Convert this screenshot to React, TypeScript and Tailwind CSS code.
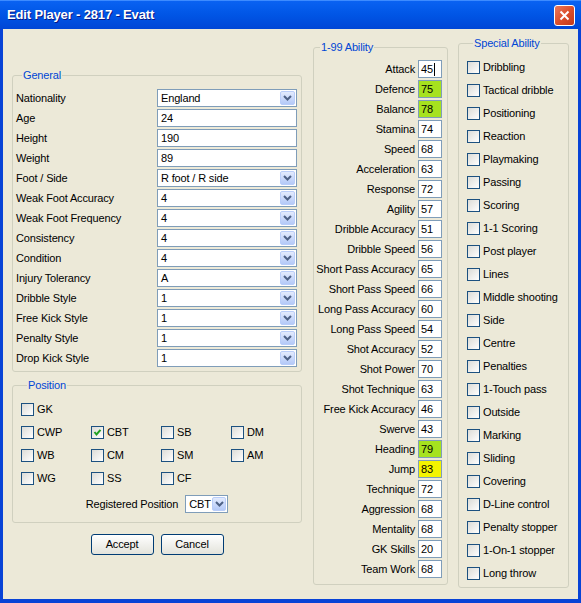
import React from 'react';
import clsx from 'clsx';

type Attr = { label: string; value: string; hi?: 'green' | 'yellow'; caret?: boolean };

const general: { label: string; value: string; select: boolean }[] = [
  { label: 'Nationality', value: 'England', select: true },
  { label: 'Age', value: '24', select: false },
  { label: 'Height', value: '190', select: false },
  { label: 'Weight', value: '89', select: false },
  { label: 'Foot / Side', value: 'R foot / R side', select: true },
  { label: 'Weak Foot Accuracy', value: '4', select: true },
  { label: 'Weak Foot Frequency', value: '4', select: true },
  { label: 'Consistency', value: '4', select: true },
  { label: 'Condition', value: '4', select: true },
  { label: 'Injury Tolerancy', value: 'A', select: true },
  { label: 'Dribble Style', value: '1', select: true },
  { label: 'Free Kick Style', value: '1', select: true },
  { label: 'Penalty Style', value: '1', select: true },
  { label: 'Drop Kick Style', value: '1', select: true },
];

const abilities: Attr[] = [
  { label: 'Attack', value: '45', caret: true },
  { label: 'Defence', value: '75', hi: 'green' },
  { label: 'Balance', value: '78', hi: 'green' },
  { label: 'Stamina', value: '74' },
  { label: 'Speed', value: '68' },
  { label: 'Acceleration', value: '63' },
  { label: 'Response', value: '72' },
  { label: 'Agility', value: '57' },
  { label: 'Dribble Accuracy', value: '51' },
  { label: 'Dribble Speed', value: '56' },
  { label: 'Short Pass Accuracy', value: '65' },
  { label: 'Short Pass Speed', value: '66' },
  { label: 'Long Pass Accuracy', value: '60' },
  { label: 'Long Pass Speed', value: '54' },
  { label: 'Shot Accuracy', value: '52' },
  { label: 'Shot Power', value: '70' },
  { label: 'Shot Technique', value: '63' },
  { label: 'Free Kick Accuracy', value: '46' },
  { label: 'Swerve', value: '43' },
  { label: 'Heading', value: '79', hi: 'green' },
  { label: 'Jump', value: '83', hi: 'yellow' },
  { label: 'Technique', value: '72' },
  { label: 'Aggression', value: '68' },
  { label: 'Mentality', value: '68' },
  { label: 'GK Skills', value: '20' },
  { label: 'Team Work', value: '68' },
];

const specials = [
  'Dribbling', 'Tactical dribble', 'Positioning', 'Reaction', 'Playmaking', 'Passing',
  'Scoring', '1-1 Scoring', 'Post player', 'Lines', 'Middle shooting', 'Side', 'Centre',
  'Penalties', '1-Touch pass', 'Outside', 'Marking', 'Sliding', 'Covering', 'D-Line control',
  'Penalty stopper', '1-On-1 stopper', 'Long throw',
];

const positions: (string | null)[][] = [
  ['GK', null, null, null],
  ['CWP', 'CBT', 'SB', 'DM'],
  ['WB', 'CM', 'SM', 'AM'],
  ['WG', 'SS', 'CF', null],
];

const Chevron = () => (
  <svg width="9" height="6" viewBox="0 0 9 6">
    <path d="M1 1 L4.5 4.5 L8 1" fill="none" stroke="#4d6185" strokeWidth="2" />
  </svg>
);

const Select = ({ value, className }: { value: string; className?: string }) => (
  <div className={clsx('flex h-[18px] items-center border border-[#7f9db9] bg-white', className)}>
    <span className="flex-1 pl-[3px] leading-none">{value}</span>
    <span className="m-px flex h-[14px] w-[15px] items-center justify-center rounded-[2px] border border-[#b9cdf9] bg-gradient-to-b from-[#e3ebfd] to-[#b4c9f8]">
      <Chevron />
    </span>
  </div>
);

const CheckBox = ({ label, checked }: { label: string; checked?: boolean }) => (
  <div className="flex items-center gap-[3px]">
    <span className="flex h-[13px] w-[13px] items-center justify-center border border-[#1c5180] bg-gradient-to-br from-[#dcdcd7] to-white">
      {checked && (
        <svg width="9" height="9" viewBox="0 0 9 9">
          <path d="M1.5 4 L3.5 6.5 L7.5 1.8" fill="none" stroke="#21a121" strokeWidth="2" />
        </svg>
      )}
    </span>
    <span className="leading-none">{label}</span>
  </div>
);

const Group = ({ title, className, children }: { title: string; className?: string; children: React.ReactNode }) => (
  <fieldset className={clsx('rounded-[3px] border border-[#d0d0bf]', className)}>
    <legend className="ml-[6px] px-px leading-[14px] text-[#0046d5]">{title}</legend>
    {children}
  </fieldset>
);

const XpButton = ({ children }: { children: React.ReactNode }) => (
  <button className="flex h-[21px] w-[63px] items-center justify-center rounded-[3px] border border-[#003c74] bg-gradient-to-b from-white to-[#e3e3db] leading-none text-black">
    {children}
  </button>
);

export default function App() {
  return (
    <div className="flex h-[603px] w-[581px] flex-col overflow-hidden font-['Liberation_Sans',Arial,sans-serif] text-[11px] tracking-[-0.15px] text-black">
      {/* title bar */}
      <div className="flex h-[29px] shrink-0 items-center justify-between border-t border-[#3d8bff] bg-gradient-to-b from-[#0a62f2] via-[#0055e5] to-[#0046d6] pl-[7px] pr-[6px]">
        <span className="text-[13px] font-bold tracking-[-0.15px] text-white [text-shadow:1px_1px_#0a1883]">
          Edit Player - 2817 - Evatt
        </span>
        <span className="flex h-[21px] w-[21px] items-center justify-center rounded-[3px] border border-white bg-gradient-to-br from-[#e9785c] via-[#dc4f2c] to-[#c3391a]">
          <svg width="11" height="11" viewBox="0 0 11 11">
            <path d="M1.5 1.5 L9.5 9.5 M9.5 1.5 L1.5 9.5" stroke="white" strokeWidth="2" />
          </svg>
        </span>
      </div>

      {/* body */}
      <div className="flex flex-1 border-x-[3px] border-b-[4px] border-[#0843d6] bg-[#ece9d8]">
        {/* left column */}
        <div className="ml-[9px] mt-[39px] flex w-[290px] flex-col">
          <Group title="General" className="pb-[4px] pl-[3px] pr-[4px] pt-[7px]">
            <div className="flex flex-col gap-[2px]">
              {general.map((g) => (
                <div key={g.label} className="flex h-[18px] items-center">
                  <span className="flex-1 leading-none">{g.label}</span>
                  {g.select ? (
                    <Select value={g.value} className="w-[140px]" />
                  ) : (
                    <div className="flex h-[18px] w-[140px] items-center border border-[#7f9db9] bg-white pl-[3px] leading-none">
                      {g.value}
                    </div>
                  )}
                </div>
              ))}
            </div>
          </Group>

          <Group title="Position" className="mt-[6px] pb-[9px] pl-[8px] pt-[6px]">
            <div className="flex flex-col">
              {positions.map((row, i) => (
                <div key={i} className="grid h-[23px] grid-cols-[70px_70px_70px_70px] items-center">
                  {row.map((p, j) => (p ? <CheckBox key={j} label={p} checked={p === 'CBT'} /> : <span key={j} />))}
                </div>
              ))}
            </div>
            <div className="mt-[5px] flex h-[18px] items-center justify-center gap-[7px] pr-[8px]">
              <span className="leading-none">Registered Position</span>
              <Select value="CBT" className="w-[43px]" />
            </div>
          </Group>

          <div className="mt-[11px] flex justify-center gap-[7px]">
            <XpButton>Accept</XpButton>
            <XpButton>Cancel</XpButton>
          </div>
        </div>

        {/* 1-99 ability */}
        <div className="ml-[11px] mt-[11px] w-[135px]">
          <Group title="1-99 Ability" className="pb-[6px] pr-[5px] pt-[6px]">
            <div className="flex flex-col gap-[2px]">
              {abilities.map((a) => (
                <div key={a.label} className="flex h-[18px] items-center gap-[3px]">
                  <span className="flex-1 whitespace-nowrap text-right leading-none">{a.label}</span>
                  <div
                    className={clsx(
                      'flex h-[18px] w-[24px] items-center border border-[#7f9db9] pl-[2px] leading-none',
                      a.hi === 'green' && 'bg-[#a6e21f]',
                      a.hi === 'yellow' && 'bg-[#f4f400]',
                      !a.hi && 'bg-white',
                    )}
                  >
                    {a.value}
                    {a.caret && <span className="ml-px h-[13px] w-px bg-black" />}
                  </div>
                </div>
              ))}
            </div>
          </Group>
        </div>

        {/* special ability */}
        <div className="ml-[10px] mt-[7px] w-[111px]">
          <Group title="Special Ability" className="pb-[2px] pl-[8px] pt-[6px]">
            <div className="flex flex-col">
              {specials.map((s) => (
                <div key={s} className="flex h-[23px] items-center whitespace-nowrap">
                  <CheckBox label={s} />
                </div>
              ))}
            </div>
          </Group>
        </div>
      </div>
    </div>
  );
}
